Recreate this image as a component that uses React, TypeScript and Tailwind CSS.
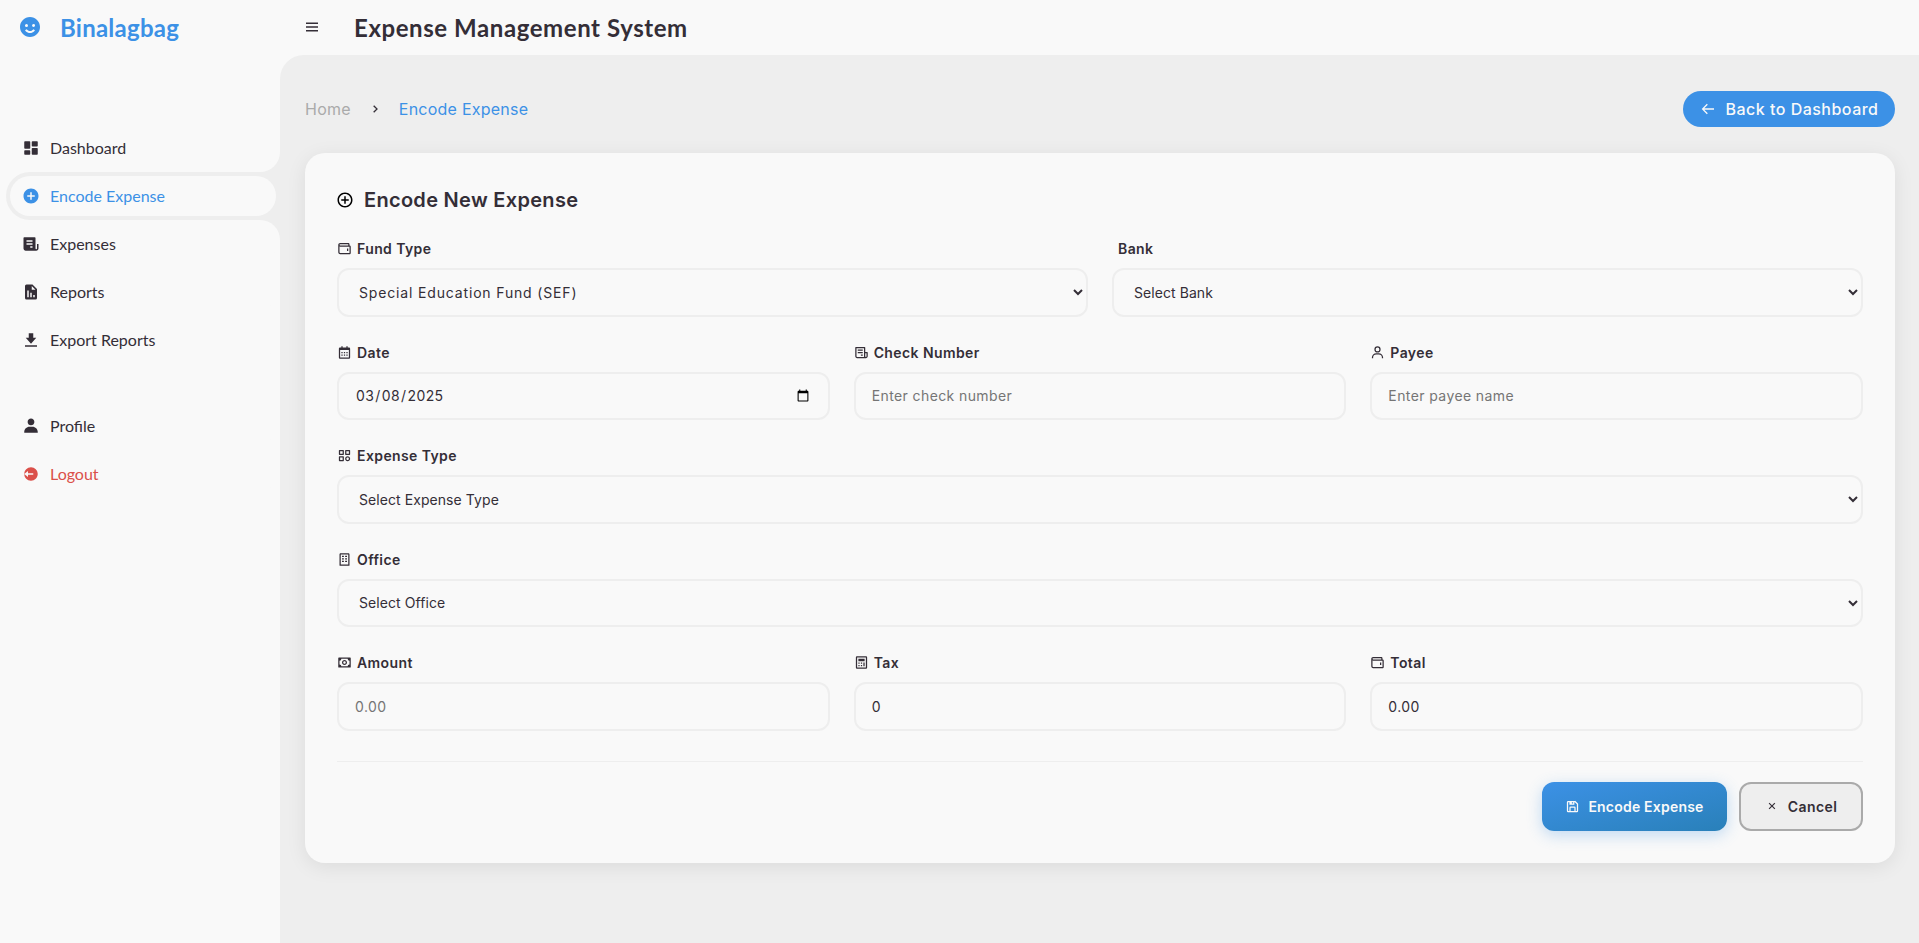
import React from 'react';
import { IconType } from 'react-icons';
import {
  BiSolidSmile,
  BiSolidDashboard,
  BiSolidPlusCircle,
  BiSolidReceipt,
  BiSolidReport,
  BiSolidDownload,
  BiSolidUser,
  BiSolidLogOutCircle,
  BiMenu,
  BiChevronRight,
  BiArrowBack,
  BiPlusCircle,
  BiWallet,
  BiCalendar,
  BiReceipt,
  BiUser,
  BiCategory,
  BiBuilding,
  BiMoney,
  BiCalculator,
  BiSave,
  BiX,
} from 'react-icons/bi';

interface NavItem {
  label: string;
  icon: IconType;
  active?: boolean;
}

const topItems: NavItem[] = [
  { label: 'Dashboard', icon: BiSolidDashboard },
  { label: 'Encode Expense', icon: BiSolidPlusCircle, active: true },
  { label: 'Expenses', icon: BiSolidReceipt },
  { label: 'Reports', icon: BiSolidReport },
  { label: 'Export Reports', icon: BiSolidDownload },
];

const SideLink: React.FC<NavItem & { danger?: boolean }> = ({ label, icon: Icon, active, danger }) => (
  <li
    className={`relative h-12 ml-[6px] p-1 rounded-l-[48px] ${
      active
        ? "bg-[#eeeeee] before:content-[''] before:absolute before:right-0 before:-top-10 before:w-10 before:h-10 before:rounded-full before:shadow-[20px_20px_0_#eeeeee] after:content-[''] after:absolute after:right-0 after:-bottom-10 after:w-10 after:h-10 after:rounded-full after:shadow-[20px_-20px_0_#eeeeee]"
        : ''
    }`}
  >
    <a
      href="#"
      className={`relative z-10 flex h-full items-center rounded-[48px] bg-[#f9f9f9] pl-[12px] text-base ${
        active ? 'text-[#3c91e6]' : danger ? 'text-[#db504a]' : 'text-[#342e37]'
      }`}
    >
      <Icon className="w-[18px] h-[18px] shrink-0" />
      <span className="ml-[10px]">{label}</span>
    </a>
  </li>
);

const Field: React.FC<{ label: string; icon?: IconType; children: React.ReactNode }> = ({ label, icon: Icon, children }) => (
  <div className="min-w-0">
    <label className={`flex h-[23px] mb-[8px] items-center text-[14px] font-semibold text-[#342e37] ${Icon ? '' : 'pl-[6px]'}`}>
      {Icon && <Icon className="w-[15px] h-[15px] mr-[5px] shrink-0" />}
      {label}
    </label>
    {children}
  </div>
);

const boxClass =
  'w-full h-[48.5px] px-4 rounded-xl border-2 border-[#eeeeee] bg-[#f9f9f9] text-[14px] text-[#342e37] outline-none placeholder:text-[#757575]';

const App: React.FC = () => {
  return (
    <div className="flex h-screen overflow-hidden bg-[#f9f9f9] font-['Lato',sans-serif]">
      <aside className="w-[280px] shrink-0 overflow-hidden">
        <a href="#" className="flex h-14 items-center pl-[18px] text-[24px] font-bold tracking-[0.01em] text-[#3c91e6]">
          <BiSolidSmile className="w-6 h-6 mr-[18px] -mt-[2px] shrink-0" />
          Binalagbag
        </a>
        <ul className="mt-[68px]">
          {topItems.map((item) => (
            <SideLink key={item.label} {...item} />
          ))}
        </ul>
        <ul className="mt-[38px]">
          <SideLink label="Profile" icon={BiSolidUser} />
          <SideLink label="Logout" icon={BiSolidLogOutCircle} danger />
        </ul>
      </aside>

      <div className="flex-1 min-w-0 flex flex-col">
        <nav className="flex h-[55px] shrink-0 items-center pl-[23px] text-[#342e37]">
          <BiMenu className="w-[18px] h-[18px] -mt-[1px]" />
          <h1 className="ml-[33px] mt-[1px] text-[24px] font-bold tracking-[0.024em]">Expense Management System</h1>
        </nav>

        <main className="flex-1 rounded-tl-3xl bg-[#eeeeee] pt-9 pl-[25px] pr-6 font-['Inter',sans-serif] tracking-[0.025em]">
          <div className="flex h-9 items-center justify-between mb-[26px]">
            <ul className="flex items-center text-[16px] tracking-[0.015em]">
              <li className="text-[#aaaaaa]">Home</li>
              <li className="mx-[16px] text-[#342e37]">
                <BiChevronRight className="w-4 h-4" />
              </li>
              <li className="text-[#3c91e6]">Encode Expense</li>
            </ul>
            <a href="#" className="flex w-[212px] h-9 items-center justify-center rounded-[36px] bg-[#3c91e6] text-[16px] font-medium tracking-[0.03em] text-[#f9f9f9]">
              <BiArrowBack className="w-4 h-4 mr-[10px]" />
              Back to Dashboard
            </a>
          </div>

          <section className="rounded-[20px] bg-[#f9f9f9] p-8 shadow-[0_4px_20px_rgba(0,0,0,0.08)]">
            <h2 className="flex h-[30px] items-center mb-[22px] text-[20px] font-semibold tracking-[0.015em] text-[#342e37]">
              <BiPlusCircle className="w-[18px] h-[18px] mr-[10px] -ml-[1px] text-black" />
              Encode New Expense
            </h2>

            <div className="flex flex-col gap-6">
              <div className="grid grid-cols-2 gap-6">
                <Field label="Fund Type" icon={BiWallet}>
                  <select className={`${boxClass} tracking-[0.06em]`} defaultValue="sef">
                    <option value="sef">Special Education Fund (SEF)</option>
                    <option value="gf">General Fund (GF)</option>
                  </select>
                </Field>
                <Field label="Bank">
                  <select className={`${boxClass} tracking-[0.005em]`} defaultValue="">
                    <option value="">Select Bank</option>
                  </select>
                </Field>
              </div>

              <div className="grid grid-cols-3 gap-6">
                <Field label="Date" icon={BiCalendar}>
                  <input type="date" className={boxClass} defaultValue="2025-03-08" />
                </Field>
                <Field label="Check Number" icon={BiReceipt}>
                  <input type="text" className={boxClass} placeholder="Enter check number" />
                </Field>
                <Field label="Payee" icon={BiUser}>
                  <input type="text" className={boxClass} placeholder="Enter payee name" />
                </Field>
              </div>

              <Field label="Expense Type" icon={BiCategory}>
                <select className={`${boxClass} tracking-[0.005em]`} defaultValue="">
                  <option value="">Select Expense Type</option>
                </select>
              </Field>

              <Field label="Office" icon={BiBuilding}>
                <select className={`${boxClass} tracking-[0.005em]`} defaultValue="">
                  <option value="">Select Office</option>
                </select>
              </Field>

              <div className="grid grid-cols-3 gap-6">
                <Field label="Amount" icon={BiMoney}>
                  <input type="text" className={boxClass} placeholder="0.00" />
                </Field>
                <Field label="Tax" icon={BiCalculator}>
                  <input type="text" className={boxClass} defaultValue="0" />
                </Field>
                <Field label="Total" icon={BiWallet}>
                  <input type="text" className={boxClass} defaultValue="0.00" />
                </Field>
              </div>
            </div>

            <div className="mt-[30px] pt-5 border-t border-[#eeeeee] flex justify-end gap-3">
              <button className="flex h-[49px] w-[185px] items-center justify-center rounded-xl bg-gradient-to-br from-[#3c91e6] to-[#2980b9] text-[14px] font-semibold tracking-[0.015em] text-[#f9f9f9] shadow-[0_4px_15px_rgba(60,145,230,0.3)]">
                <BiSave className="w-[15px] h-[15px] mr-[8px]" />
                Encode Expense
              </button>
              <button className="flex h-[49px] w-[124px] items-center justify-center rounded-xl border-2 border-[#aaaaaa] bg-[#eeeeee] text-[14px] font-semibold text-[#342e37]">
                <BiX className="w-[14px] h-[14px] mr-[9px]" />
                Cancel
              </button>
            </div>
          </section>
        </main>
      </div>
    </div>
  );
};

export default App;
